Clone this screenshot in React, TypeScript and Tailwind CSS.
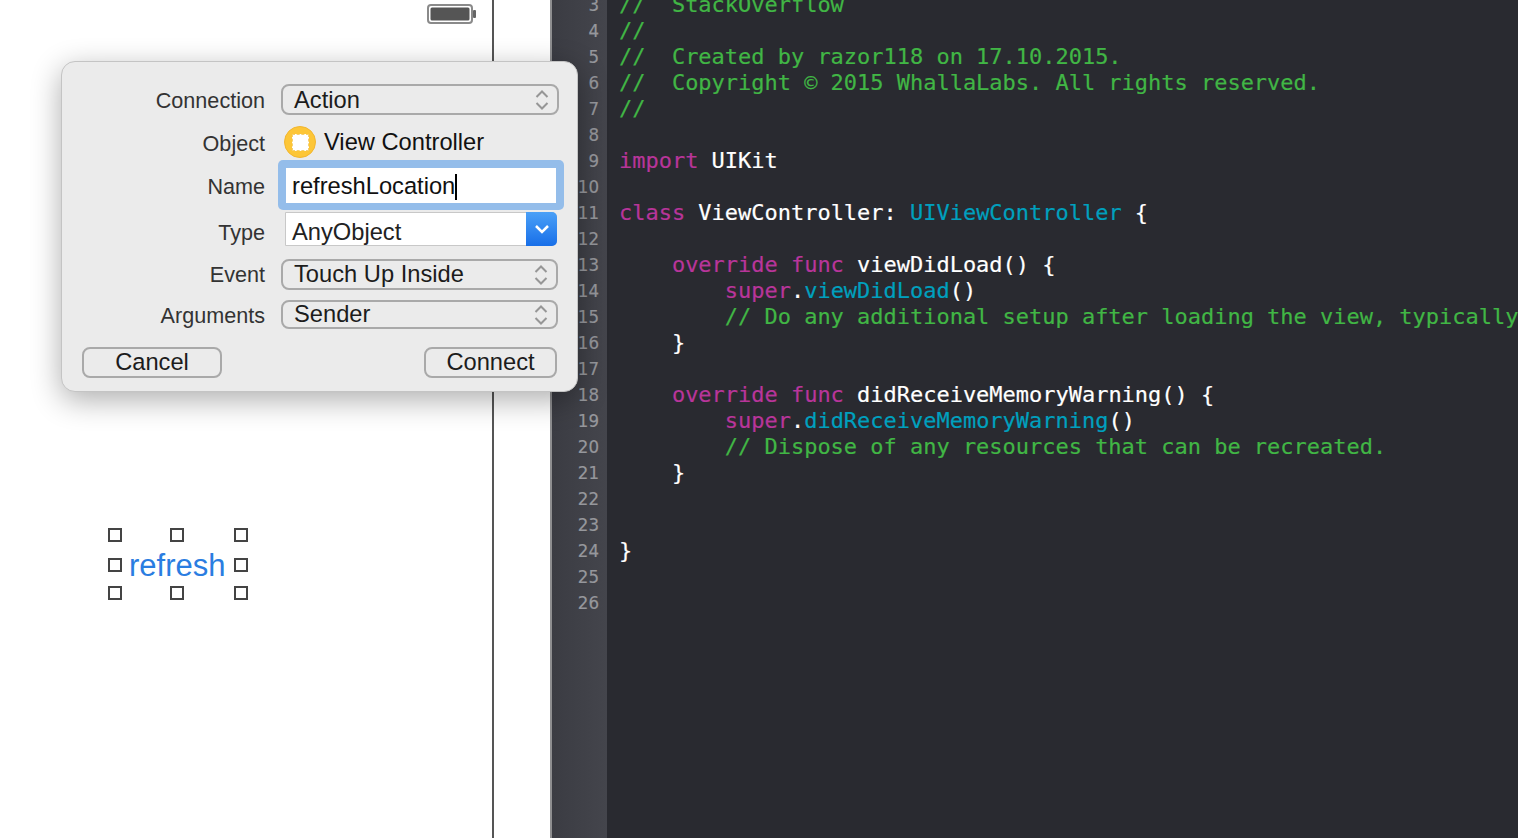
const SANS = 'font-["Liberation_Sans",Arial,sans-serif]'

type Tok = [string, 'c' | 'k' | 't' | 'p']

const lines: Record<number, Tok[]> = {
  3: [['//  StackOverflow', 'c']],
  4: [['//', 'c']],
  5: [['//  Created by razor118 on 17.10.2015.', 'c']],
  6: [['//  Copyright © 2015 WhallaLabs. All rights reserved.', 'c']],
  7: [['//', 'c']],
  9: [['import', 'k'], [' UIKit', 'p']],
  11: [['class', 'k'], [' ViewController: ', 'p'], ['UIViewController', 't'], [' {', 'p']],
  13: [['    ', 'p'], ['override func', 'k'], [' viewDidLoad() {', 'p']],
  14: [['        ', 'p'], ['super', 'k'], ['.', 'p'], ['viewDidLoad', 't'], ['()', 'p']],
  15: [['        // Do any additional setup after loading the view, typically from a nib.', 'c']],
  16: [['    }', 'p']],
  18: [['    ', 'p'], ['override func', 'k'], [' didReceiveMemoryWarning() {', 'p']],
  19: [['        ', 'p'], ['super', 'k'], ['.', 'p'], ['didReceiveMemoryWarning', 't'], ['()', 'p']],
  20: [['        // Dispose of any resources that can be recreated.', 'c']],
  21: [['    }', 'p']],
  24: [['}', 'p']],
}

const numbers = Array.from({ length: 24 }, (_, i) => i + 3)

const tokClass = {
  c: 'text-[#41b645]',
  k: 'text-[#b8359a]',
  t: 'text-[#00a0be]',
  p: 'text-white',
}

function Stepper() {
  return (
    <svg width="16" height="24" viewBox="0 0 16 24" fill="none" stroke="#969696" strokeWidth="2" className="shrink-0">
      <path d="M2.5 9 8 3.5 13.5 9" />
      <path d="M2.5 15 8 20.5 13.5 15" />
    </svg>
  )
}

function Popup({ label, w, textPt = '' }: { label: string; w: string; textPt?: string }) {
  return (
    <div className={`flex h-full ${w} items-center justify-between rounded-[8px] border-2 border-[#a9a9a9] pl-[11px] pr-[7px] text-[23.7px] text-[#1c1c1c]`}>
      <span className={textPt}>{label}</span>
      <Stepper />
    </div>
  )
}

function Label({ children, pt }: { children: string; pt: string }) {
  return <div className={`w-[203px] shrink-0 text-right text-[21.6px] leading-[26px] text-[#333] ${pt}`}>{children}</div>
}

function Handle({ x, y }: { x: string; y: string }) {
  return <div className={`absolute ${x} ${y} h-[14px] w-[14px] border-2 border-[#444] bg-white`} />
}

function Dialog() {
  return (
    <div className={`absolute left-[61px] top-[61px] flex w-[517px] flex-col rounded-[14px] border border-[#c4c4c4] bg-[#ebebeb] pt-[22px] pb-[13px] shadow-[0_8px_30px_rgba(0,0,0,0.32)] ${SANS}`}>
      <div className="flex h-[31px] items-center gap-[16px]">
        <Label pt="pt-[3px]">Connection</Label>
        <Popup label="Action" w="w-[278px]" textPt="pt-[2px]" />
      </div>
      <div className="mt-[11px] flex h-[32px] items-center">
        <Label pt="pt-[3px]">Object</Label>
        <div className="ml-[19px] flex h-[32px] w-[32px] items-center justify-center rounded-full border border-[#f2b630] bg-[#fdc637]">
          <div className="h-[17px] w-[17px] border border-dashed border-[#f5cf70] bg-white" />
        </div>
        <span className="ml-[8px] pt-[1px] text-[23.7px] text-[#111]">View Controller</span>
      </div>
      <div className="mt-[2px] flex h-[50px] items-center">
        <Label pt="pt-[4px]">Name</Label>
        <div className="ml-[13px] h-[50px] w-[286px] rounded-[5px] bg-[#94bdea] py-[8px] pl-[8px]">
          <div className="flex h-[35px] w-[270px] items-center bg-white pl-[6px] pt-[2px] text-[23.7px] text-[#111]">
            <span>refreshLocation</span>
            <span className="h-[26px] w-[2px] bg-black" />
          </div>
        </div>
      </div>
      <div className="mt-[2px] flex h-[34px] items-center">
        <Label pt="pt-[7px]">Type</Label>
        <div className="ml-[20px] flex h-[34px] w-[272px] rounded-r-[5px] border border-[#c8c8c8] bg-white">
          <div className="flex-1 pl-[6px] pt-[2px] text-[23.7px] leading-[34px] text-[#222]">AnyObject</div>
          <div className="-my-px -mr-px flex w-[31px] items-center justify-center rounded-r-[5px] bg-gradient-to-b from-[#4aa0f7] to-[#176ee8]">
            <svg width="16" height="10" viewBox="0 0 16 10" fill="none" stroke="white" strokeWidth="2.5">
              <path d="M2 2 8 8 14 2" />
            </svg>
          </div>
        </div>
      </div>
      <div className="mt-[13px] flex h-[31px] items-center gap-[16px]">
        <Label pt="pt-0">Event</Label>
        <Popup label="Touch Up Inside" w="w-[277px]" />
      </div>
      <div className="mt-[10px] flex h-[29px] items-center gap-[16px]">
        <Label pt="pt-[2px]">Arguments</Label>
        <Popup label="Sender" w="w-[277px]" />
      </div>
      <div className="mt-[18px] flex h-[31px] items-stretch justify-between pl-[20px] pr-[20px] text-[23.7px] text-[#1c1c1c]">
        <div className="flex w-[140px] items-center justify-center rounded-[8px] border-2 border-[#a9a9a9]">Cancel</div>
        <div className="flex w-[133px] items-center justify-center rounded-[8px] border-2 border-[#a9a9a9]">Connect</div>
      </div>
    </div>
  )
}

export default function App() {
  return (
    <div className="relative flex h-[838px] w-[1518px] overflow-hidden bg-white">
      <div className="relative flex h-full w-[552px] shrink-0 justify-start border-r-2 border-[#8e8e90] bg-white">
        <div className="h-full w-[494px] border-r-2 border-[#555]" />
        <svg width="50" height="20" viewBox="0 0 50 20" className="absolute left-[427px] top-[4px]" fill="none">
          <rect x="1" y="1" width="44" height="18" rx="3" stroke="#8a8a8a" strokeWidth="2" />
          <rect x="3.5" y="3.5" width="39" height="13" rx="1.5" fill="#555" />
          <rect x="46" y="6" width="3" height="8" rx="1" fill="#666" />
        </svg>
        <Handle x="left-[108px]" y="top-[528px]" />
        <Handle x="left-[170px]" y="top-[528px]" />
        <Handle x="left-[234px]" y="top-[528px]" />
        <Handle x="left-[108px]" y="top-[558px]" />
        <Handle x="left-[234px]" y="top-[558px]" />
        <Handle x="left-[108px]" y="top-[586px]" />
        <Handle x="left-[170px]" y="top-[586px]" />
        <Handle x="left-[234px]" y="top-[586px]" />
        <span className={`absolute left-[129px] top-[548px] text-[31px] leading-[36px] text-[#2a7de1] ${SANS}`}>refresh</span>
      </div>
      <div className="h-full w-[55px] shrink-0 bg-gradient-to-r from-[#3b3c43] to-[#44454c] pr-[8px] font-['DejaVu_Sans',sans-serif] text-[18.5px] leading-[26px] text-[#96979c] [font-stretch:condensed] [-webkit-text-stroke:0.2px]">
        <div className="-mt-[8px] text-right">
          {numbers.map((n) => (
            <div key={n} className="h-[26px]">{n}</div>
          ))}
        </div>
      </div>
      <div className="h-full min-w-0 flex-1 overflow-hidden bg-[#292a30] pl-[12px] font-['DejaVu_Sans_Mono','Liberation_Mono',monospace] text-[21.97px] leading-[26px] [-webkit-text-stroke:0.2px]">
        <div className="-mt-[8px]">
          {numbers.map((n) => (
            <div key={n} className="h-[26px] whitespace-pre">
              {(lines[n] ?? []).map(([text, kind], i) => (
                <span key={i} className={tokClass[kind]}>{text}</span>
              ))}
            </div>
          ))}
        </div>
      </div>
      <Dialog />
    </div>
  )
}
